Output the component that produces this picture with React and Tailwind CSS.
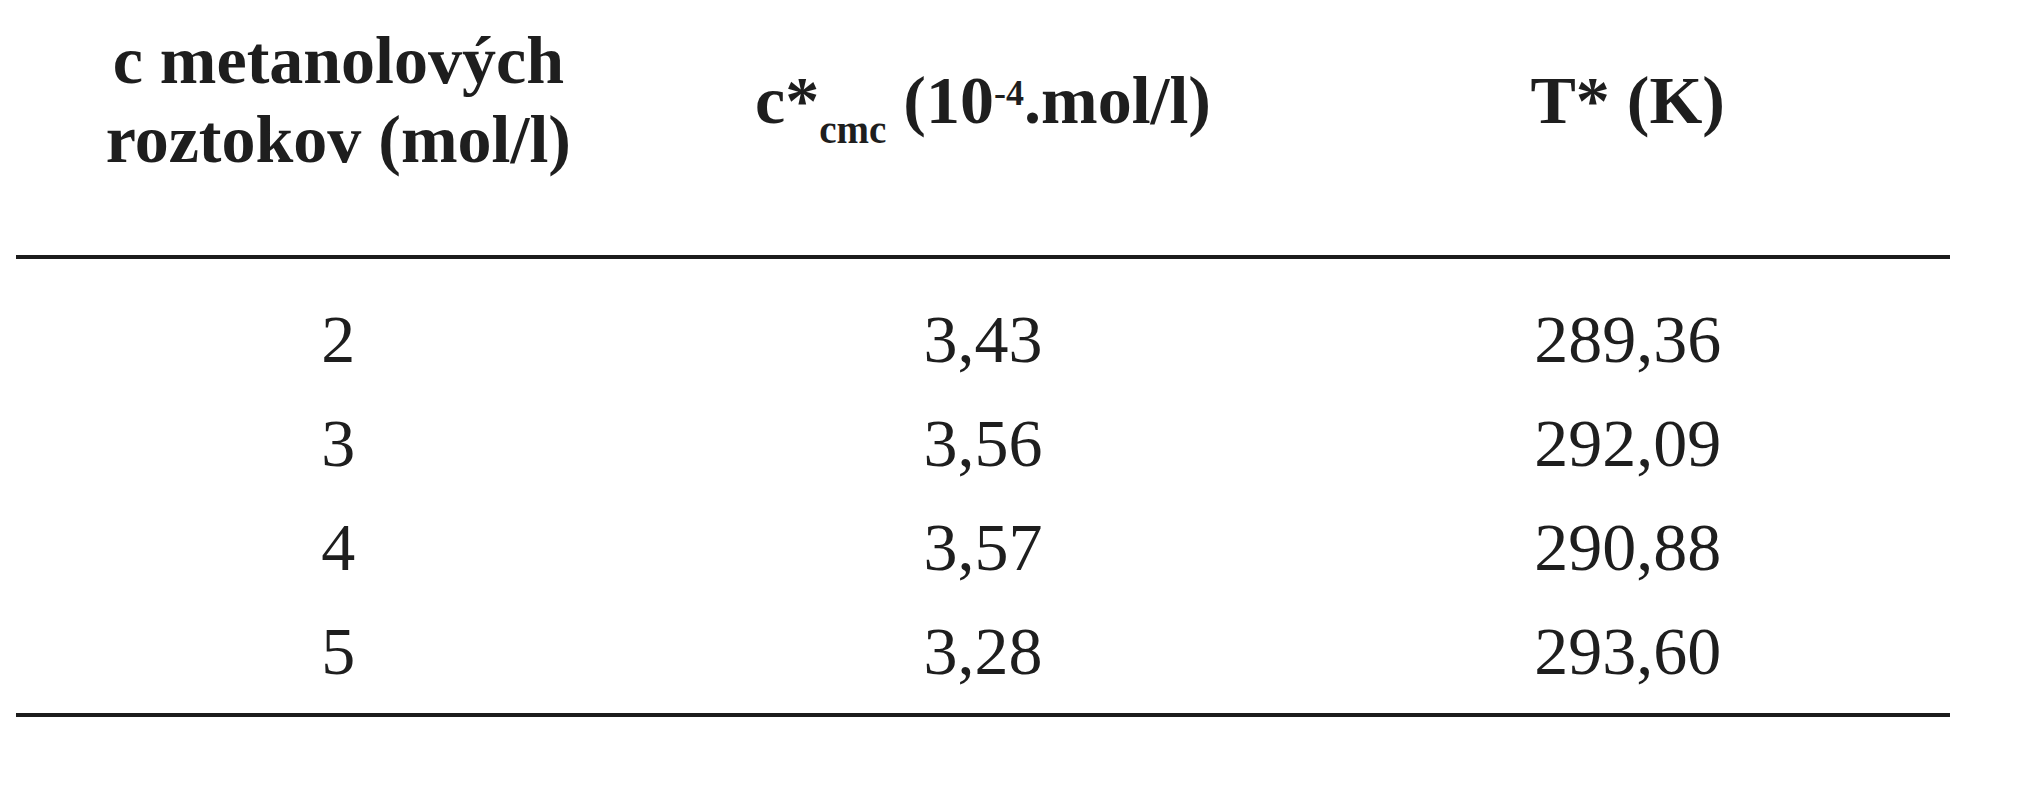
import React from "react";

const rows = [
  ["2", "3,43", "289,36"],
  ["3", "3,56", "292,09"],
  ["4", "3,57", "290,88"],
  ["5", "3,28", "293,60"],
];

export default function App() {
  return (
    <div className="min-h-screen bg-white font-['Liberation_Serif','Times_New_Roman',serif] text-[#1e1e1e]">
      <div className="ml-[16px] w-[1934px] pt-[21px]">
        {/* header */}
        <div className="grid grid-cols-3 items-center pb-[76px] text-center text-[68px] font-bold leading-[79px]">
          <div>
            c metanolových
            <br />
            roztokov (mol/l)
          </div>
          <div>
            c*
            <sub className="bottom-[-20px] text-[39px]">cmc</sub> (10
            <sup className="text-[36px]">-4</sup>.mol/l)
          </div>
          <div>T* (K)</div>
        </div>

        <div className="h-[4px] bg-[#1c1c1c]" />

        {/* data */}
        <div className="pt-[28px] pb-[10px] text-center text-[68px] leading-[104px]">
          {rows.map((r) => (
            <div key={r[0]} className="grid grid-cols-3">
              {r.map((v, i) => (
                <div key={i}>{v}</div>
              ))}
            </div>
          ))}
        </div>

        <div className="h-[4px] bg-[#1c1c1c]" />
      </div>
    </div>
  );
}
